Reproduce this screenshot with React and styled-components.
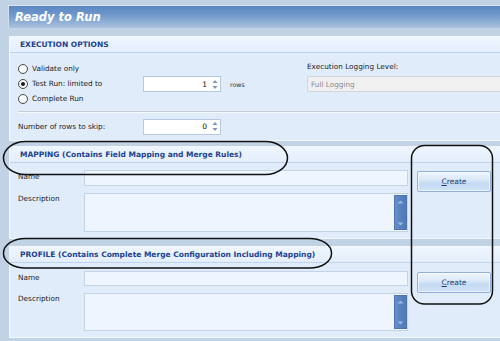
import React from 'react';
import styled, { createGlobalStyle } from 'styled-components';

const Global = createGlobalStyle`
  html, body { margin: 0; padding: 0; background: #c2d2e5; }
  body { font-family: "DejaVu Sans", "Liberation Sans", sans-serif; }
  * { box-sizing: border-box; }
`;

const Root = styled.div`
  position: relative;
  width: 500px;
  height: 341px;
  overflow: hidden;
  background: #c2d2e5;
  padding: 5px 0 0 8px;
  display: flex;
  flex-direction: column;
  font-family: "DejaVu Sans", sans-serif;
  font-size: 7.3px;
  color: #222;
`;

const TitleBar = styled.div`
  height: 23px;
  flex: none;
  border-top: 1px solid #dce6f1;
  border-left: 1px solid #d2deeb;
  background: linear-gradient(to bottom, #5a87c1 0%, #6f98cb 40%, #9bb8da 85%, #aac2de 100%);
  display: flex;
  align-items: center;
  padding-left: 6px;
  margin-bottom: 8px;
  font: italic bold 11.5px "DejaVu Sans", sans-serif;
  color: #fff;
`;

const Panel = styled.section`
  flex: none;
  margin-left: 1px;
  margin-right: -4px;
  margin-bottom: ${p => p.$gap || 0}px;
  border: 1px solid #f2f7fd;
  background: #e1ecfa;
  display: flex;
  flex-direction: column;
`;

const SectionHeader = styled.div`
  height: 16px;
  flex: none;
  background: linear-gradient(to bottom, #eef5fe, #e4eefb);
  border-bottom: 1px solid #bfd4ee;
  padding-left: 10px;
  display: flex;
  align-items: center;
  font: bold 7.5px "DejaVu Sans", sans-serif;
  color: #21428f;
  white-space: nowrap;
`;

const OptionsArea = styled.div`
  height: 58px;
  display: flex;
  padding-left: 8px;
`;

const LeftCol = styled.div`
  width: 289px;
  padding-top: 8px;
  display: flex;
  flex-direction: column;
`;

const RightCol = styled.div`
  flex: 1;
  padding-top: 9px;
  display: flex;
  flex-direction: column;
`;

const OptionRow = styled.div`
  height: 15px;
  display: grid;
  grid-template-columns: 14px 111px 78px auto;
  align-items: center;
`;

const Radio = styled.span`
  width: 10px;
  height: 10px;
  border-radius: 50%;
  border: 1px solid #4a4a4a;
  background: radial-gradient(circle at 40% 35%, #ffffff, #eef0f3);
  display: flex;
  align-items: center;
  justify-content: center;
  &::after {
    content: "";
    width: 4px;
    height: 4px;
    border-radius: 50%;
    background: ${p => (p.$checked ? '#1a1a1a' : 'transparent')};
  }
`;

const Label = styled.span`
  white-space: nowrap;
  line-height: 10px;
`;

const SmallLabel = styled.span`
  font-size: 6.3px;
  color: #333;
  margin-left: 9px;
  white-space: nowrap;
`;

const Spinner = styled.div`
  width: 78px;
  height: 16px;
  border: 1px solid #b7c9df;
  background: #fff;
  display: flex;
  align-items: center;
  justify-content: flex-end;
  padding-right: 2px;
  gap: 5px;
  font-size: 7.5px;
  color: #111;
`;

const SpinArrows = () => (
  <svg width="6" height="11" viewBox="0 0 6 11">
    <path d="M3 1 L5.5 4 L0.5 4 Z" fill="#7c97bd" />
    <path d="M0.5 7 L5.5 7 L3 10 Z" fill="#7c97bd" />
  </svg>
);

const FieldLabel = styled.div`
  height: 10px;
  line-height: 10px;
  margin-bottom: 4px;
  white-space: nowrap;
`;

const Combo = styled.div`
  height: 16px;
  border: 1px solid #d1d6dc;
  background: #f0f0f0;
  color: #8c8c8c;
  display: flex;
  align-items: center;
  padding-left: 3px;
  font-size: 7.3px;
`;

const Separator = styled.div`
  margin-left: 8px;
  height: 2px;
  border-top: 1px solid #c8cdd4;
  border-bottom: 1px solid #f5f8fc;
`;

const SkipRow = styled.div`
  height: 27px;
  padding-left: 8px;
  display: grid;
  grid-template-columns: 125px 78px;
  align-items: center;
`;

const FormGrid = styled.div`
  display: grid;
  grid-template-columns: 66px 324px 74px;
  grid-template-rows: ${p => p.$nameH}px ${p => p.$descH}px;
  column-gap: 0;
  row-gap: 7px;
  padding: ${p => p.$top}px 0 6px 8px;
`;

const RowLabel = styled.div`
  align-self: start;
  padding-top: ${p => p.$pt || 1}px;
  line-height: 10px;
  white-space: nowrap;
`;

const TextInput = styled.div`
  border: 1px solid #c3d3e8;
  background: #eef5fe;
`;

const TextArea = styled.div`
  border: 1px solid #c3d3e8;
  background: #eef5fe;
  display: flex;
  justify-content: flex-end;
  padding: 1px 0 1px 0;
`;

const ScrollBar = styled.div`
  width: 13px;
  background: linear-gradient(to right, #6890c8, #5781bf 50%, #5079b7);
  border: 1px solid #4c74ae;
  display: flex;
  flex-direction: column;
  justify-content: space-between;
  align-items: center;
  padding: 4px 0 3px;
`;

const ScrollArrow = ({ down }) => (
  <svg width="7" height="4" viewBox="0 0 7 4">
    {down ? (
      <path d="M0.5 0.5 L6.5 0.5 L3.5 3.5 Z" fill="#9db8df" />
    ) : (
      <path d="M3.5 0.5 L6.5 3.5 L0.5 3.5 Z" fill="#9db8df" />
    )}
  </svg>
);

const CreateButton = styled.button`
  grid-column: 3;
  grid-row: 1 / span 2;
  align-self: start;
  margin: 1px 0 0 9px;
  width: 74px;
  height: 21px;
  padding: 0;
  border: 1px solid #93b1d8;
  border-radius: 2px;
  background: linear-gradient(to bottom, #eef5fd 0%, #dce9f8 40%, #c4dbf4 60%, #cfe2f7 100%);
  box-shadow: inset 0 0 0 1px rgba(255, 255, 255, 0.55);
  font: 7.5px "DejaVu Sans", sans-serif;
  color: #23406e;
  u { text-decoration: underline; }
`;

const Annotations = styled.svg`
  position: absolute;
  left: 0;
  top: 0;
  pointer-events: none;
`;

function FormSection({ title, top, nameH, descH }) {
  return (
    <FormGrid $top={top} $nameH={nameH} $descH={descH}>
      <RowLabel $pt={2}>Name</RowLabel>
      <TextInput />
      <CreateButton>
        <u>C</u>reate
      </CreateButton>
      <RowLabel>Description</RowLabel>
      <TextArea>
        <ScrollBar>
          <ScrollArrow />
          <ScrollArrow down />
        </ScrollBar>
      </TextArea>
    </FormGrid>
  );
}

export default function App() {
  return (
    <>
      <Global />
      <Root>
        <TitleBar>Ready to Run</TitleBar>

        <Panel $gap={5}>
          <SectionHeader>EXECUTION OPTIONS</SectionHeader>
          <OptionsArea>
            <LeftCol>
              <OptionRow>
                <Radio />
                <Label>Validate only</Label>
              </OptionRow>
              <OptionRow>
                <Radio $checked />
                <Label>Test Run: limited to</Label>
                <Spinner>
                  <span>1</span>
                  <SpinArrows />
                </Spinner>
                <SmallLabel>rows</SmallLabel>
              </OptionRow>
              <OptionRow>
                <Radio />
                <Label>Complete Run</Label>
              </OptionRow>
            </LeftCol>
            <RightCol>
              <FieldLabel>Execution Logging Level:</FieldLabel>
              <Combo>Full Logging</Combo>
            </RightCol>
          </OptionsArea>
          <Separator />
          <SkipRow>
            <Label>Number of rows to skip:</Label>
            <Spinner>
              <span>0</span>
              <SpinArrows />
            </Spinner>
          </SkipRow>
        </Panel>

        <Panel $gap={7}>
          <SectionHeader>MAPPING (Contains Field Mapping and Merge Rules)</SectionHeader>
          <FormSection top={7} nameH={16} descH={39} />
        </Panel>

        <Panel>
          <SectionHeader>PROFILE (Contains Complete Merge Configuration Including Mapping)</SectionHeader>
          <FormSection top={8} nameH={15} descH={38} />
        </Panel>

        <Annotations width="500" height="341" viewBox="0 0 500 341">
          <rect x="3.5" y="141.5" width="284" height="33" rx="22" ry="16.5" fill="none" stroke="#111" strokeWidth="1.5" />
          <rect x="3.5" y="238.5" width="328" height="29.5" rx="22" ry="14.5" fill="none" stroke="#111" strokeWidth="1.5" />
          <rect x="411.5" y="145.5" width="81" height="158.5" rx="13" ry="13" fill="none" stroke="#111" strokeWidth="1.5" />
        </Annotations>
      </Root>
    </>
  );
}
